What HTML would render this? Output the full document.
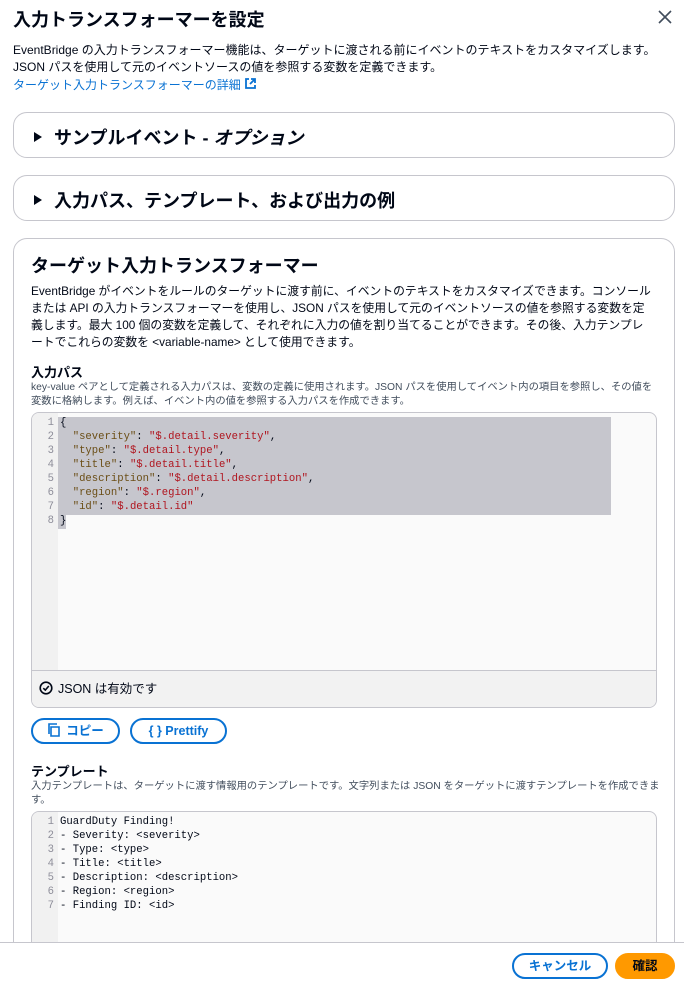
<!DOCTYPE html>
<html><head><meta charset="utf-8"><style>
*{box-sizing:border-box;margin:0;padding:0}
html,body{width:684px;height:982px;overflow:hidden}
body{background:#fff;font-family:"Liberation Sans","Noto Sans CJK JP",sans-serif;color:#000716;position:relative}
.a{position:absolute;white-space:nowrap}
.h1{font-size:18px;font-weight:bold}
.p{font-size:12px;line-height:17px}
.box{position:absolute;left:13px;width:662px;border:1px solid #c6c6cd;border-radius:14px;background:#fff}
.tri{display:inline-block;width:0;height:0;border-left:8px solid #000716;border-top:5px solid transparent;border-bottom:5px solid transparent;margin-right:12px;vertical-align:2px}
.code{font-family:"Liberation Mono","DejaVu Sans Mono",monospace;font-size:10.6px;line-height:14px;white-space:pre}
.ed{position:absolute;left:31px;width:626px;border:1px solid #c6c6cd;border-radius:8px;background:#fafafa;overflow:hidden}
.gut{position:absolute;left:0;top:0;bottom:0;width:26px;background:#f1f1f1;color:#8d8d99;text-align:right;padding-right:4px}
.k{color:#6b4e16}.s{color:#b0151f}
.btn{position:absolute;border:2px solid #0972d3;border-radius:14px;color:#0972d3;font-weight:bold;font-size:12.5px;text-align:center;line-height:22px;background:#fff}
</style></head><body>
<div class="a h1" style="left:13px;top:6px">入力トランスフォーマーを設定</div>
<svg class="a" style="left:657px;top:9px" width="16" height="16"><path d="M2 2L14 14M14 2L2 14" stroke="#414d5c" stroke-width="1.6"/></svg>
<div class="a p" style="left:13px;top:42px">EventBridge の入力トランスフォーマー機能は、ターゲットに渡される前にイベントのテキストをカスタマイズします。<br>JSON パスを使用して元のイベントソースの値を参照する変数を定義できます。</div>
<div class="a p" style="left:13px;top:77px;color:#0972d3">ターゲット入力トランスフォーマーの詳細 <svg width="13" height="13" style="vertical-align:-1px"><path d="M5 2H2V11H11V8M7 2H11V6M11 2L6 7" stroke="#0972d3" stroke-width="1.8" fill="none"/></svg></div>

<div class="box" style="top:112px;height:46px"><div class="a h1" style="left:20px;top:11px"><span class="tri"></span>サンプルイベント - <i>オプション</i></div></div>
<div class="box" style="top:175px;height:46px"><div class="a h1" style="left:20px;top:11px"><span class="tri"></span>入力パス、テンプレート、および出力の例</div></div>

<div class="box" style="top:238px;height:760px;border-radius:14px"></div>
<div class="a h1" style="left:31px;top:252px">ターゲット入力トランスフォーマー</div>
<div class="a p" style="left:31px;top:283px;font-size:11.8px">EventBridge がイベントをルールのターゲットに渡す前に、イベントのテキストをカスタマイズできます。コンソール<br>または API の入力トランスフォーマーを使用し、JSON パスを使用して元のイベントソースの値を参照する変数を定<br>義します。最大 100 個の変数を定義して、それぞれに入力の値を割り当てることができます。その後、入力テンプレ<br>ートでこれらの変数を &lt;variable-name&gt; として使用できます。</div>

<div class="a" style="left:31px;top:365px;font-size:13px;line-height:15px;font-weight:bold">入力パス</div>
<div class="a" style="left:31px;top:381px;font-size:10.3px;line-height:13.5px;color:#414d5c">key-value ペアとして定義される入力パスは、変数の定義に使用されます。JSON パスを使用してイベント内の項目を参照し、その値を<br>変数に格納します。例えば、イベント内の値を参照する入力パスを作成できます。</div>

<div class="ed" style="top:412px;height:296px">
<div class="gut code" style="padding-top:3px">1
2
3
4
5
6
7
8</div>
<div class="a" style="left:26px;top:4px;width:553px;height:98px;background:#c6c6cd"></div>
<div class="a" style="left:26px;top:102px;width:8px;height:14px;background:#c6c6cd"></div>
<div class="a code" style="left:28px;top:3px">{
  <span class="k">"severity"</span>: <span class="s">"$.detail.severity"</span>,
  <span class="k">"type"</span>: <span class="s">"$.detail.type"</span>,
  <span class="k">"title"</span>: <span class="s">"$.detail.title"</span>,
  <span class="k">"description"</span>: <span class="s">"$.detail.description"</span>,
  <span class="k">"region"</span>: <span class="s">"$.region"</span>,
  <span class="k">"id"</span>: <span class="s">"$.detail.id"</span>
}</div>
<div class="a" style="left:0;top:257px;width:626px;height:38px;background:#f2f2f2;border-top:1px solid #c6c6cd"></div>
<div class="a" style="left:7px;top:265px;font-size:12.5px"><svg width="14" height="14" style="vertical-align:-2px;margin-right:5px"><circle cx="7" cy="7" r="5.8" stroke="#000716" stroke-width="1.6" fill="none"/><path d="M4.3 7.2L6.3 9.1L9.8 5" stroke="#000716" stroke-width="1.6" fill="none"/></svg>JSON は有効です</div>
</div>

<div class="btn" style="left:31px;top:718px;width:89px;height:26px"><svg width="14" height="14" style="vertical-align:-2px;margin-right:5px"><path d="M4 4H12V13H4Z M2 11V1H10" stroke="#0972d3" stroke-width="1.6" fill="none"/></svg>コピー</div>
<div class="btn" style="left:130px;top:718px;width:97px;height:26px">{ } Prettify</div>

<div class="a" style="left:31px;top:764px;font-size:13px;line-height:15px;font-weight:bold">テンプレート</div>
<div class="a" style="left:31px;top:780px;font-size:10.3px;line-height:13.5px;color:#414d5c">入力テンプレートは、ターゲットに渡す情報用のテンプレートです。文字列または JSON をターゲットに渡すテンプレートを作成できま<br>す。</div>

<div class="ed" style="top:811px;height:200px">
<div class="gut code" style="padding-top:3px">1
2
3
4
5
6
7</div>
<div class="a code" style="left:28px;top:3px">GuardDuty Finding!
- Severity: &lt;severity&gt;
- Type: &lt;type&gt;
- Title: &lt;title&gt;
- Description: &lt;description&gt;
- Region: &lt;region&gt;
- Finding ID: &lt;id&gt;</div>
</div>

<div class="a" style="left:0;top:942px;width:684px;height:40px;background:#fff;border-top:1px solid #c6c6cd"></div>
<div class="btn" style="left:512px;top:953px;width:96px;height:26px">キャンセル</div>
<div class="btn" style="left:615px;top:953px;width:60px;height:26px;background:#ff9900;border-color:#ff9900;color:#000716">確認</div>
</body></html>
